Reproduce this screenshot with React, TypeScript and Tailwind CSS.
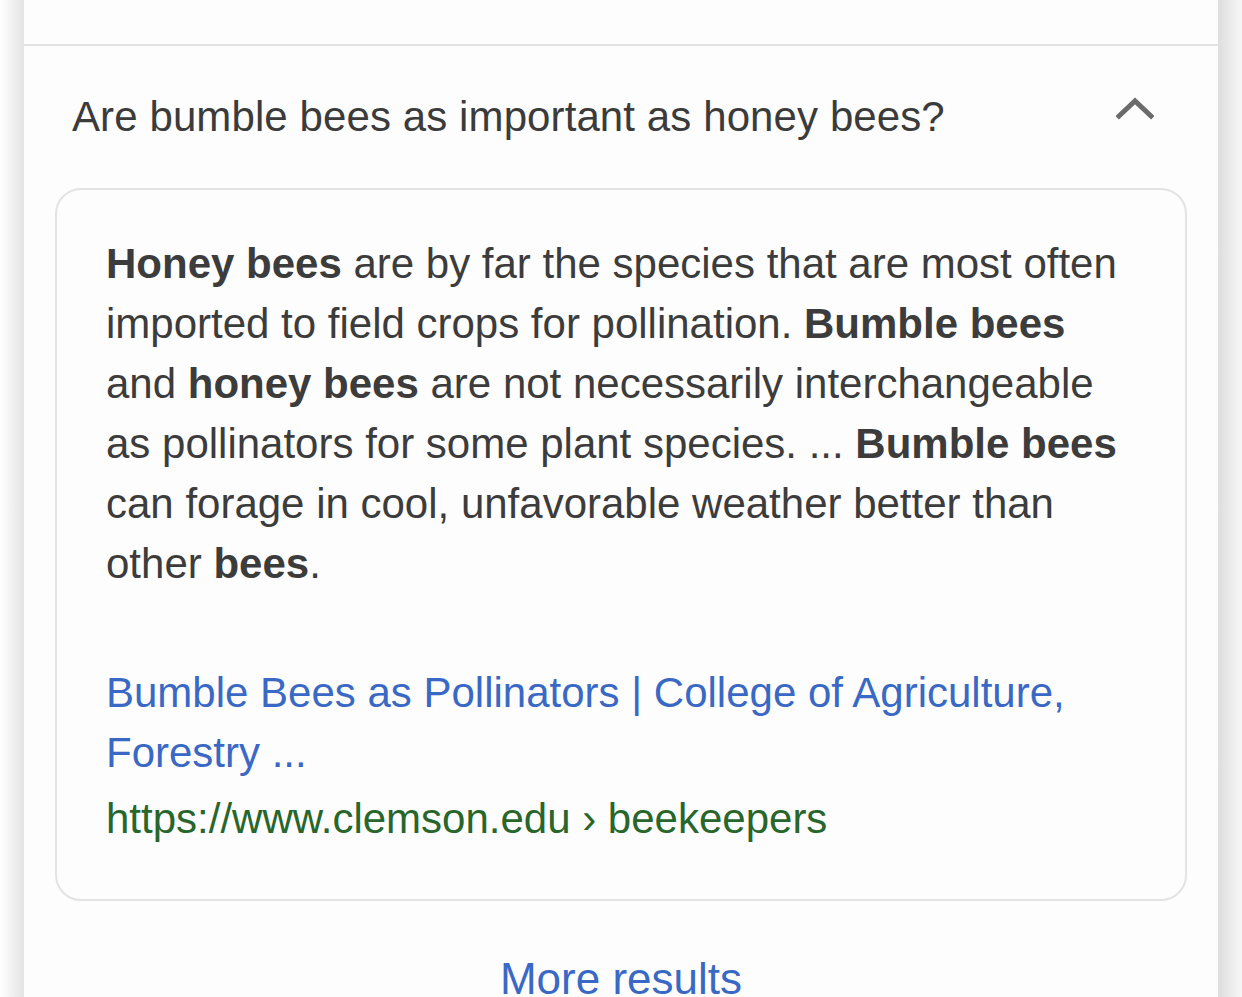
const font = { fontFamily: '"Liberation Sans", Arial, sans-serif' };

const ChevronUp = () => (
  <svg width="38" height="24" viewBox="0 0 38 24" className="shrink-0">
    <polyline
      points="3,20 19,5 35,20"
      fill="none"
      stroke="#6b6b6b"
      strokeWidth="5"
      strokeLinecap="square"
    />
  </svg>
);

export default function App() {
  return (
    <div
      className="flex w-full h-[997px] overflow-hidden bg-white text-[42px] leading-[60px]"
      style={font}
    >
      {/* sombra izquierda */}
      <div className="w-[24px] shrink-0 bg-gradient-to-r from-white to-[#e3e3e3]" />

      <div className="flex-1 flex flex-col bg-[#fdfdfd]">
        {/* resultado anterior (cortado) */}
        <div className="h-[46px] shrink-0 border-b-2 border-[#e2e2e2]" />

        {/* pregunta */}
        <div className="shrink-0 flex items-center justify-between pl-[48px] pr-[64px] pt-[41px] pb-[41px]">
          <span className="text-[#3b3b3b] tracking-[0.1px]">
            Are bumble bees as important as honey bees?
          </span>
          <div className="-mt-[18px]">
            <ChevronUp />
          </div>
        </div>

        {/* respuesta */}
        <div className="shrink-0 mx-[31px] border-2 border-[#e3e3e3] rounded-[26px] pl-[49px] pr-[40px] pt-[44px] pb-[50px]">
          <p className="text-[#3c3c3c]">
            <b className="font-bold">Honey bees</b> are by far the species that are most often
            imported to field crops for pollination. <b className="font-bold">Bumble bees</b>{" "}
            and <b className="font-bold">honey bees</b> are not necessarily interchangeable
            as pollinators for some plant species. ... <b className="font-bold">Bumble bees</b>{" "}
            can forage in cool, unfavorable weather better than other{" "}
            <b className="font-bold">bees</b>.
          </p>
          <a className="block mt-[69px] text-[#3a69c5] pr-[60px]">
            Bumble Bees as Pollinators | College of Agriculture, Forestry ...
          </a>
          <div className="mt-[6px] text-[#28662c]">
            https://www.clemson.edu › beekeepers
          </div>
        </div>

        {/* más resultados */}
        <div className="shrink-0 flex justify-center pt-[48px]">
          <span className="text-[44px] text-[#3a69c5]">More results</span>
        </div>
      </div>

      {/* sombra derecha */}
      <div className="w-[24px] shrink-0 bg-gradient-to-r from-[#dedede] to-[#f7f7f7]" />
    </div>
  );
}
